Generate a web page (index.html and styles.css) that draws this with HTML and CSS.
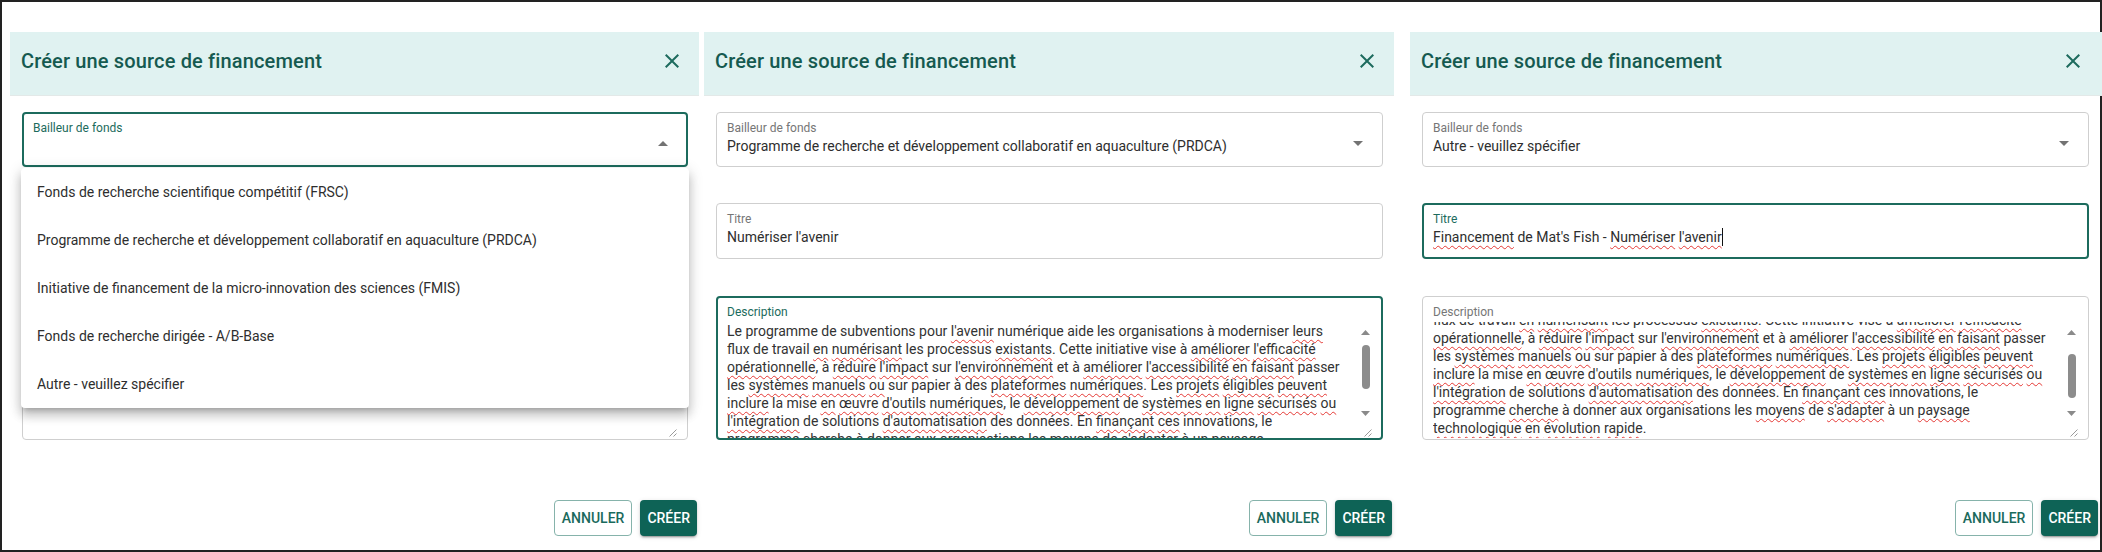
FILE: index.html
```html
<!DOCTYPE html>
<html lang="fr">
<head>
<meta charset="utf-8">
<title>Créer une source de financement</title>
<link rel="stylesheet" href="styles.css">
</head>
<body>
<div class="frame">

  <!-- Dialog 1: select open -->
  <section class="dialog d1">
    <header class="dlg-head">
      <h2 class="dlg-title">Créer une source de financement</h2>
      <button class="close" type="button" aria-label="Fermer"><svg viewBox="0 0 24 24" width="24" height="24"><path d="M19 6.41 17.59 5 12 10.59 6.41 5 5 6.41 10.59 12 5 17.59 6.41 19 12 13.41 17.59 19 19 17.59 13.41 12z"/></svg></button>
    </header>
    <div class="dlg-body">
      <div class="select-wrap">
        <div class="field field-select focused">
          <div class="field-main"><span class="label">Bailleur de fonds</span><span class="value"></span></div>
          <svg class="sel-arrow" viewBox="0 0 10 5" width="10" height="5"><path d="M0 5 5 0 10 5z"/></svg>
        </div>
        <ul class="menu">
          <li>Fonds de recherche scientifique compétitif (FRSC)</li>
          <li>Programme de recherche et développement collaboratif en aquaculture (PRDCA)</li>
          <li>Initiative de financement de la micro-innovation des sciences (FMIS)</li>
          <li>Fonds de recherche dirigée - A/B-Base</li>
          <li>Autre - veuillez spécifier</li>
        </ul>
      </div>
      <div class="field field-text under-menu">
        <span class="value"></span>
      </div>
      <div class="field field-area">
        <span class="label under-menu-label"></span>
        <div class="ta-row">
          <div class="ta-text"></div>
          <div class="sbar">
            <div class="sb-spacer"></div>
            <div class="sb-corner"><svg viewBox="0 0 15 15" width="15" height="15"><path d="M13.5 6.5 6.5 13.5M13.5 10.5 10.5 13.5"/></svg></div>
          </div>
        </div>
      </div>
    </div>
    <footer class="dlg-actions">
      <button class="btn btn-outlined" type="button">Annuler</button>
      <button class="btn btn-contained" type="button">Créer</button>
    </footer>
  </section>

  <!-- Dialog 2: description focused -->
  <section class="dialog d2">
    <header class="dlg-head">
      <h2 class="dlg-title">Créer une source de financement</h2>
      <button class="close" type="button" aria-label="Fermer"><svg viewBox="0 0 24 24" width="24" height="24"><path d="M19 6.41 17.59 5 12 10.59 6.41 5 5 6.41 10.59 12 5 17.59 6.41 19 12 13.41 17.59 19 19 17.59 13.41 12z"/></svg></button>
    </header>
    <div class="dlg-body">
      <div class="select-wrap">
        <div class="field field-select">
          <div class="field-main"><span class="label">Bailleur de fonds</span><span class="value">Programme de recherche et développement collaboratif en aquaculture (PRDCA)</span></div>
          <svg class="sel-arrow" viewBox="0 0 10 5" width="10" height="5"><path d="M0 0h10L5 5z"/></svg>
        </div>
      </div>
      <div class="field field-text">
        <span class="label">Titre</span><span class="value">Numériser l'avenir</span>
      </div>
      <div class="field field-area focused">
        <span class="label">Description</span>
        <div class="ta-row">
          <div class="ta-text">
            <div class="ta-inner">Le programme de subventions pour <span class="sp">l'avenir</span> numérique aide les organisations à moderniser <span class="sp">leurs</span><br>flux de travail <span class="sp">en</span> <span class="sp">numérisant</span> les processus <span class="sp">existants</span>. Cette initiative vise à <span class="sp">améliorer</span> <span class="sp">l'efficacité</span><br><span class="sp">opérationnelle</span>, à <span class="sp">réduire</span> <span class="sp">l'impact</span> sur <span class="sp">l'environnement</span> et à <span class="sp">améliorer</span> <span class="sp">l'accessibilité</span> <span class="sp">en</span> <span class="sp">faisant</span> passer<br>les <span class="sp">systèmes</span> <span class="sp">manuels</span> <span class="sp">ou</span> sur papier à des <span class="sp">plateformes</span> <span class="sp">numériques</span>. Les <span class="sp">projets</span> <span class="sp">éligibles</span> <span class="sp">peuvent</span><br><span class="sp">inclure</span> la mise <span class="sp">en</span> <span class="sp">œuvre</span> <span class="sp">d'outils</span> <span class="sp">numériques</span>, le <span class="sp">développement</span> de <span class="sp">systèmes</span> <span class="sp">en</span> <span class="sp">ligne</span> <span class="sp">sécurisés</span> <span class="sp">ou</span><br><span class="sp">l'intégration</span> de solutions <span class="sp">d'automatisation</span> des données. En <span class="sp">finançant</span> <span class="sp">ces</span> innovations, le<br>programme <span class="sp">cherche</span> à donner aux organisations les <span class="sp">moyens</span> de <span class="sp">s'adapter</span> à un <span class="sp">paysage</span><br><span class="sp">technologique</span> <span class="sp">en</span> <span class="sp">évolution</span> <span class="sp">rapide</span>.</div>
          </div>
          <div class="sbar">
            <div class="sb-btn"><svg viewBox="0 0 9 5" width="9" height="5"><path d="M0 5 4.5 0 9 5z"/></svg></div>
            <div class="sb-track"><div class="sb-thumb"></div></div>
            <div class="sb-btn"><svg viewBox="0 0 9 5" width="9" height="5"><path d="M0 0h9L4.5 5z"/></svg></div>
            <div class="sb-corner"><svg viewBox="0 0 15 15" width="15" height="15"><path d="M13.5 6.5 6.5 13.5M13.5 10.5 10.5 13.5"/></svg></div>
          </div>
        </div>
      </div>
    </div>
    <footer class="dlg-actions">
      <button class="btn btn-outlined" type="button">Annuler</button>
      <button class="btn btn-contained" type="button">Créer</button>
    </footer>
  </section>

  <!-- Dialog 3: title focused -->
  <section class="dialog d3">
    <header class="dlg-head">
      <h2 class="dlg-title">Créer une source de financement</h2>
      <button class="close" type="button" aria-label="Fermer"><svg viewBox="0 0 24 24" width="24" height="24"><path d="M19 6.41 17.59 5 12 10.59 6.41 5 5 6.41 10.59 12 5 17.59 6.41 19 12 13.41 17.59 19 19 17.59 13.41 12z"/></svg></button>
    </header>
    <div class="dlg-body">
      <div class="select-wrap">
        <div class="field field-select">
          <div class="field-main"><span class="label">Bailleur de fonds</span><span class="value">Autre - veuillez spécifier</span></div>
          <svg class="sel-arrow" viewBox="0 0 10 5" width="10" height="5"><path d="M0 0h10L5 5z"/></svg>
        </div>
      </div>
      <div class="field field-text focused">
        <span class="label">Titre</span><span class="value"><span class="sp">Financement</span> de Mat's Fish - <span class="sp">Numériser</span> <span class="sp">l'avenir</span><span class="text-caret"></span></span>
      </div>
      <div class="field field-area">
        <span class="label">Description</span>
        <div class="ta-row">
          <div class="ta-text">
            <div class="ta-inner scrolled">Le programme de subventions pour <span class="sp">l'avenir</span> numérique aide les organisations à moderniser <span class="sp">leurs</span><br>flux de travail <span class="sp">en</span> <span class="sp">numérisant</span> les processus <span class="sp">existants</span>. Cette initiative vise à <span class="sp">améliorer</span> <span class="sp">l'efficacité</span><br><span class="sp">opérationnelle</span>, à <span class="sp">réduire</span> <span class="sp">l'impact</span> sur <span class="sp">l'environnement</span> et à <span class="sp">améliorer</span> <span class="sp">l'accessibilité</span> <span class="sp">en</span> <span class="sp">faisant</span> passer<br>les <span class="sp">systèmes</span> <span class="sp">manuels</span> <span class="sp">ou</span> sur papier à des <span class="sp">plateformes</span> <span class="sp">numériques</span>. Les <span class="sp">projets</span> <span class="sp">éligibles</span> <span class="sp">peuvent</span><br><span class="sp">inclure</span> la mise <span class="sp">en</span> <span class="sp">œuvre</span> <span class="sp">d'outils</span> <span class="sp">numériques</span>, le <span class="sp">développement</span> de <span class="sp">systèmes</span> <span class="sp">en</span> <span class="sp">ligne</span> <span class="sp">sécurisés</span> <span class="sp">ou</span><br><span class="sp">l'intégration</span> de solutions <span class="sp">d'automatisation</span> des données. En <span class="sp">finançant</span> <span class="sp">ces</span> innovations, le<br>programme <span class="sp">cherche</span> à donner aux organisations les <span class="sp">moyens</span> de <span class="sp">s'adapter</span> à un <span class="sp">paysage</span><br><span class="sp">technologique</span> <span class="sp">en</span> <span class="sp">évolution</span> <span class="sp">rapide</span>.</div>
          </div>
          <div class="sbar">
            <div class="sb-btn"><svg viewBox="0 0 9 5" width="9" height="5"><path d="M0 5 4.5 0 9 5z"/></svg></div>
            <div class="sb-track"><div class="sb-thumb thumb-end"></div></div>
            <div class="sb-btn"><svg viewBox="0 0 9 5" width="9" height="5"><path d="M0 0h9L4.5 5z"/></svg></div>
            <div class="sb-corner"><svg viewBox="0 0 15 15" width="15" height="15"><path d="M13.5 6.5 6.5 13.5M13.5 10.5 10.5 13.5"/></svg></div>
          </div>
        </div>
      </div>
    </div>
    <footer class="dlg-actions">
      <button class="btn btn-outlined" type="button">Annuler</button>
      <button class="btn btn-contained" type="button">Créer</button>
    </footer>
  </section>

</div>
</body>
</html>
```

FILE: styles.css
```css
* { box-sizing: border-box; }

html, body {
  margin: 0;
  padding: 0;
  overflow: hidden;
  background: #fff;
}

body {
  font-family: Roboto, "Noto Sans", "Liberation Sans", Arial, sans-serif;
  color: #2e2e2e;
}

.frame {
  width: 2102px;
  height: 552px;
  border: 2px solid #222;
  display: flex;
  align-items: flex-start;
  padding: 30px 0 0 8px;
}

.dialog {
  flex: none;
  display: flex;
  flex-direction: column;
}
.d1 { width: 689px; margin-right: 5px; }
.d2 { width: 690px; margin-right: 16px; }
.d3 { width: 690px; }

/* header */
.dlg-head {
  height: 64px;
  background: #e0f2f1;
  border-bottom: 1px solid #e3e9e8;
  display: flex;
  align-items: center;
  padding: 13px 15px 18px 11px;
}
.d3 .dlg-head {
  margin-right: -2px;
  padding-right: 17px;
}
.dlg-title {
  flex: 1;
  margin: 0;
  font-size: 20px;
  font-weight: 500;
  line-height: 32px;
  letter-spacing: 0.15px;
  color: #155a50;
  white-space: nowrap;
}
.close {
  width: 24px;
  height: 24px;
  padding: 0;
  border: 0;
  background: none;
  display: flex;
}
.close svg { fill: #1d6b5e; }

/* body */
.dlg-body {
  display: flex;
  flex-direction: column;
  padding: 16px 11px 0 12px;
}

.select-wrap {
  position: relative;
  height: 55px;
}

.field {
  border: 1px solid #cfcfcf;
  border-radius: 4px;
  background: #fff;
  padding: 8px 9px 0 10px;
}
.field.focused {
  border: 2px solid #1c6b5d;
  padding: 7px 8px 0 9px;
}

.label {
  display: block;
  min-height: 15px;
  font-size: 12px;
  line-height: 15px;
  color: #767676;
  white-space: nowrap;
}
.focused .label { color: #1c6b5d; }

.value {
  display: block;
  min-height: 20px;
  font-size: 14px;
  line-height: 20px;
  color: #2e2e2e;
  white-space: nowrap;
}

.field-select {
  height: 55px;
  display: flex;
  align-items: flex-start;
  padding-right: 19px;
}
.field-select.focused { padding-right: 18px; }
.field-main { flex: 1; min-width: 0; }
.sel-arrow {
  align-self: center;
  flex: none;
  fill: #737373;
}

.field-text {
  height: 56px;
  margin-top: 36px;
}
.field-text.under-menu { padding-top: 23px; }

.text-caret {
  display: inline-block;
  width: 1px;
  height: 18px;
  background: #111;
  vertical-align: -4px;
}

.sp {
  text-decoration-line: underline;
  text-decoration-style: wavy;
  text-decoration-color: #e53935;
  text-decoration-thickness: 1px;
  text-underline-offset: 3px;
  text-decoration-skip-ink: none;
}

.field-area {
  height: 144px;
  margin-top: 37px;
  overflow: hidden;
}
.ta-row {
  display: flex;
  height: 116px;
  margin-top: 2px;
}
.ta-text {
  flex: 1;
  min-width: 0;
  overflow: hidden;
  font-size: 14px;
  line-height: 18px;
  color: #333;
  white-space: nowrap;
}
.ta-inner.scrolled { margin-top: -29px; }

/* textarea scrollbar */
.sbar {
  width: 15px;
  flex: none;
  display: flex;
  flex-direction: column;
}
.sb-spacer { flex: 1; }
.sb-btn {
  height: 20px;
  display: flex;
  align-items: center;
  justify-content: center;
}
.sb-btn svg { fill: #8a8a8a; }
.sb-track {
  flex: 1;
  display: flex;
  justify-content: center;
  align-items: flex-start;
}
.sb-thumb {
  width: 8px;
  height: 44px;
  margin-top: 3px;
  border-radius: 4px;
  background: #8c8c8c;
}
.sb-thumb.thumb-end { margin-top: 12px; }
.sb-corner {
  width: 15px;
  height: 15px;
  display: flex;
}
.sb-corner svg {
  stroke: #9a9a9a;
  stroke-width: 1;
  fill: none;
}

/* dropdown menu (popover) */
.menu {
  position: absolute;
  top: 56px;
  left: -1px;
  right: -1px;
  z-index: 5;
  margin: 0;
  padding: 0;
  list-style: none;
  background: #fff;
  border-radius: 4px;
  box-shadow: 0 5px 5px -3px rgba(0,0,0,.2), 0 8px 10px 1px rgba(0,0,0,.14), 0 3px 14px 2px rgba(0,0,0,.12);
}
.menu li {
  height: 48px;
  line-height: 48px;
  padding: 0 16px;
  font-size: 14px;
  color: #2e2e2e;
  white-space: nowrap;
}

/* actions */
.dlg-actions {
  display: flex;
  justify-content: flex-end;
  gap: 8px;
  margin-top: 60px;
  padding-right: 2px;
}
.btn {
  height: 36px;
  padding: 0 7px;
  font-family: Roboto, "Noto Sans", "Liberation Sans", Arial, sans-serif;
  font-size: 14px;
  font-weight: 500;
  line-height: 1;
  text-transform: uppercase;
  border-radius: 4px;
  cursor: pointer;
}
.btn-outlined {
  border: 1px solid #86b3ab;
  background: #fff;
  color: #1b6a5c;
}
.btn-contained {
  border: 0;
  background: #0e6356;
  color: #fff;
  box-shadow: 0 3px 1px -2px rgba(0,0,0,.2), 0 2px 2px 0 rgba(0,0,0,.14), 0 1px 5px 0 rgba(0,0,0,.12);
}
```
